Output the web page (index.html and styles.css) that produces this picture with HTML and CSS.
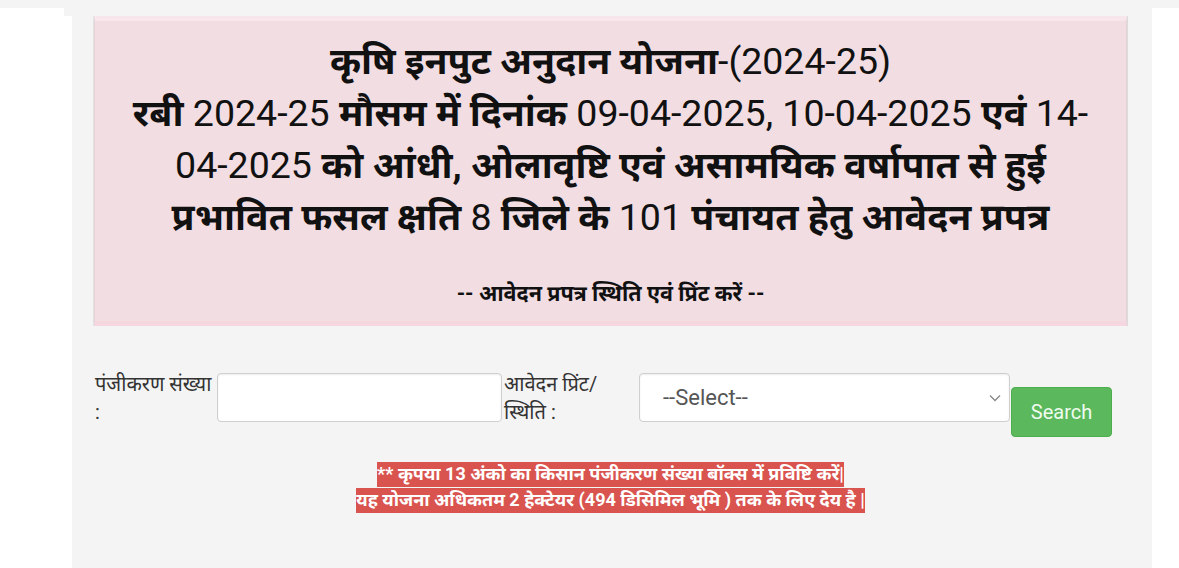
FILE: index.html
```html
<!DOCTYPE html>
<html lang="hi">
<head>
<meta charset="utf-8">
<title>कृषि इनपुट अनुदान योजना</title>
<link rel="stylesheet" href="styles.css">
</head>
<body>
<div class="page">
  <aside class="side side-left">
    <div class="side-notch"></div>
    <div class="side-fill"></div>
  </aside>
  <main class="main">
    <section class="banner">
      <h2 class="title">
        <b>कृषि इनपुट अनुदान योजना</b>-(2024-25)<br>
        <b>रबी</b> 2024-25 <b>मौसम में दिनांक</b> 09-04-2025, 10-04-2025 <b>एवं</b> 14-04-2025 <b>को आंधी, ओलावृष्टि एवं असामयिक वर्षापात से हुई प्रभावित फसल क्षति</b> 8 <b>जिले के</b> 101 <b>पंचायत हेतु आवेदन प्रपत्र</b>
      </h2>
      <p class="subtitle">-- आवेदन प्रपत्र स्थिति एवं प्रिंट करें --</p>
    </section>
    <form class="search-form">
      <label class="lbl lbl-reg" for="reg">पंजीकरण संख्या<br>:</label>
      <input class="field field-input" id="reg" type="text">
      <label class="lbl lbl-type" for="type">आवेदन प्रिंट/<br>स्थिति :</label>
      <select class="field field-select" id="type">
        <option>--Select--</option>
      </select>
      <button class="btn-search" type="button">Search</button>
    </form>
    <div class="notice">
      <span class="notice-text">** कृपया 13 अंको का किसान पंजीकरण संख्या बॉक्स में प्रविष्टि करें|<br>यह योजना अधिकतम 2 हेक्टेयर (494 डिसिमिल भूमि ) तक के लिए देय है |</span>
    </div>
  </main>
  <aside class="side side-right"></aside>
</div>
</body>
</html>
```

FILE: styles.css
```css
html, body {
  margin: 0;
  padding: 0;
}
body {
  background: #f4f4f4;
  font-family: Roboto, "Noto Sans", sans-serif;
  color: #333;
  height: 568px;
  overflow: hidden;
}
.page {
  display: flex;
  padding-top: 8px;
  height: 560px;
}
.side-left {
  width: 72px;
  display: flex;
  flex-direction: column;
}
.side-notch {
  width: 64px;
  height: 8px;
  background: #fff;
}
.side-fill {
  flex: 1;
  background: #fff;
}
.side-right {
  width: 27px;
  background: #fff;
}
.main {
  flex: 1;
  padding: 8px 25px 0 22px;
}
.banner {
  background: #f2dde3;
  border: 1px solid #e6d3d8;
  border-top: 5px solid #f7e7ec;
  border-bottom: 5px solid #f6d6df;
  box-shadow: -1px 0 0 #e2e2e2, 1px 0 0 #dcdcdc;
  padding: 14px 36px 14px;
  text-align: center;
}
.title {
  margin: 0;
  font-size: 37.5px;
  line-height: 52px;
  font-weight: 400;
  color: #111;
}
.title b {
  font-weight: 700;
}
.subtitle {
  margin: 38px 0 0;
  font-size: 21.5px;
  line-height: 26px;
  font-weight: 700;
  color: #111;
}
.search-form {
  display: flex;
  align-items: flex-start;
  margin-top: 47px;
  padding-left: 1px;
}
.lbl {
  font-size: 20px;
  line-height: 28px;
  color: #333;
  margin-top: -3px;
}
.lbl-reg {
  width: 122px;
}
.lbl-type {
  width: 135px;
  padding-left: 2px;
}
.field {
  box-sizing: border-box;
  height: 49px;
  border: 1px solid #cfcfcf;
  border-radius: 4px;
  background: #fff;
  box-shadow: inset 0 1px 2px rgba(0,0,0,0.08);
}
.field-input {
  width: 285px;
}
.field-select {
  width: 371px;
  appearance: none;
  -webkit-appearance: none;
  padding: 0 30px 0 23px;
  font-family: Roboto, sans-serif;
  font-size: 22px;
  color: #555;
  background-image: url("data:image/svg+xml,%3Csvg xmlns='http://www.w3.org/2000/svg' width='12' height='8' viewBox='0 0 12 8'%3E%3Cpath d='M1 1.5l5 5 5-5' fill='none' stroke='%23888' stroke-width='1.3'/%3E%3C/svg%3E");
  background-repeat: no-repeat;
  background-position: right 8px center;
  background-size: 12px 8px;
}
.btn-search {
  margin-top: 14px;
  margin-left: 1px;
  width: 101px;
  height: 50px;
  background: #5cb85c;
  border: 1px solid #4cae4c;
  border-radius: 4px;
  color: #effcef;
  font-family: Roboto, sans-serif;
  font-size: 20px;
  padding: 0;
}
.notice {
  text-align: center;
  margin-top: 24px;
}
.notice-text {
  background: #d9534f;
  color: #fff;
  font-size: 18px;
  font-weight: 700;
  line-height: 26px;
  padding: 1px 0 3px;
}
```
